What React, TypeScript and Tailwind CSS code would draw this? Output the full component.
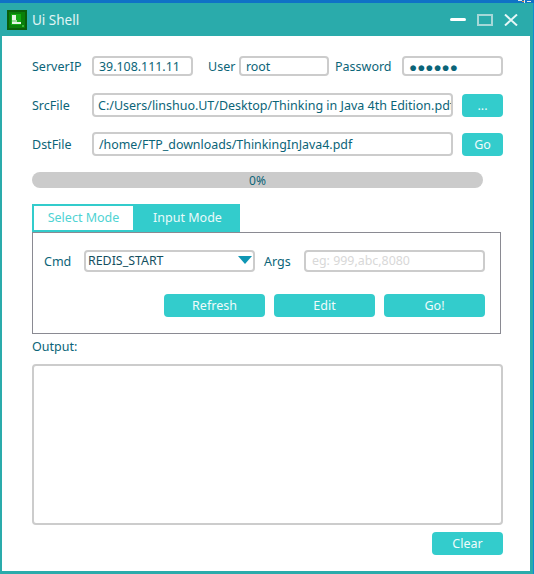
import React from 'react';

const FONT = 'font-["Noto_Sans","Open_Sans",sans-serif]';
const LABEL = 'text-[12.5px] leading-[20px] text-[#0b6478]';
const FIELD = 'h-full border-2 border-[#cccccc] rounded-[4px] bg-white text-[12.4px] leading-[18px] text-[#0b6478] overflow-hidden whitespace-nowrap';

function ActionButton({ label, className }: { label: string; className: string }) {
  return (
    <button className={`h-[23px] rounded-[4px] bg-[#33cccc] text-[#f0fbfb] text-[12.5px] leading-[23px] text-center ${className}`}>
      {label}
    </button>
  );
}

function AppLogo() {
  return (
    <svg width="20" height="20" viewBox="0 0 20 20">
      <rect width="20" height="20" fill="#0a5f0a" />
      <rect x="2" y="2" width="16" height="16" fill="#0a7f0a" />
      <rect x="4" y="4" width="10" height="11" fill="#12a812" />
      <rect x="5" y="5" width="4" height="5" fill="#e4f5e4" />
      <rect x="5" y="10" width="5" height="2" fill="#9ddb9d" />
      <rect x="5" y="12" width="9" height="2" fill="#e4f5e4" />
      <rect x="15" y="15" width="2" height="2" fill="#35b835" />
    </svg>
  );
}

function TitleBar() {
  return (
    <div className="h-[33px] flex items-center pl-[7px] pr-[15px] bg-[#2aabab]">
      <AppLogo />
      <span className="ml-[5px] mt-[1px] text-[13.5px] text-[#e2f6f6]">Ui Shell</span>
      <div className="ml-auto flex items-center gap-[11px]">
        <div className="w-[16px] h-[3px] rounded-full bg-white" />
        <div className="w-[16px] h-[12px] border-2 border-[#a5d8d8]" />
        <svg width="14" height="12" viewBox="0 0 14 12">
          <path d="M1 0.5 L13 11.5 M13 0.5 L1 11.5" stroke="#e6f7f7" strokeWidth="2" />
        </svg>
      </div>
    </div>
  );
}

export default function App() {
  return (
    <div className={`w-[534px] h-[574px] overflow-hidden bg-[#2aabab] ${FONT}`}>
      <div className="flex justify-end h-[3px] bg-[#0f72c6]">
        {/* bit of the desktop showing through at the corner */}
        <svg width="18" height="3" viewBox="0 0 18 3">
          <path d="M2 0 H6 V1 H2 Z M8 0 H9 V3 H8 Z M11 1 H15 V2 H11 Z" fill="#e8e8e8" />
          <path d="M6 1 H8 V2 H6 Z" fill="#e09040" />
        </svg>
      </div>
      <div className="flex">
        <div className="w-[533px]">
          <TitleBar />
          <div className="ml-[2px] w-[528px] h-[535px] bg-white pl-[30px] pt-[20px]">
            {/* connection row */}
            <div className="flex items-center h-[20px]">
              <span className={`${LABEL} w-[60px] mt-[2px]`}>ServerIP</span>
              <div className={`${FIELD} w-[101px] pl-[5px]`}>39.108.111.11</div>
              <span className={`${LABEL} ml-[15px] w-[31px] mt-[2px]`}>User</span>
              <div className={`${FIELD} w-[90px] pl-[5px]`}>root</div>
              <span className={`${LABEL} ml-[6px] w-[67px] mt-[2px]`}>Password</span>
              <div className={`${FIELD} w-[101px] pl-[5px]`}>
                <span className="text-[13.5px]">●●●●●●</span>
              </div>
            </div>

            {/* file rows */}
            <div className="flex items-center h-[24px] mt-[17px]">
              <span className={`${LABEL} w-[60px] mt-[1px]`}>SrcFile</span>
              <div className={`${FIELD} w-[361px] pl-[4px] pr-[1px] leading-[22px] text-[12.5px]`}>C:/Users/linshuo.UT/Desktop/Thinking in Java 4th Edition.pdf</div>
              <ActionButton label="..." className="ml-[9px] w-[41px]" />
            </div>
            <div className="flex items-center h-[24px] mt-[15px]">
              <span className={`${LABEL} w-[60px] mt-[1px]`}>DstFile</span>
              <div className={`${FIELD} w-[361px] pl-[5px] leading-[22px]`}>/home/FTP_downloads/ThinkingInJava4.pdf</div>
              <ActionButton label="Go" className="ml-[9px] w-[41px]" />
            </div>

            {/* progress */}
            <div className="mt-[16px] w-[451px] h-[16px] rounded-full bg-[#cbcbcb] text-center text-[12px] leading-[17px] text-[#0b6478]">0%</div>

            {/* tabs */}
            <div className="mt-[16px] flex h-[28px]">
              <div className="w-[103px] border-2 border-[#33cccc] bg-white text-center text-[12.5px] leading-[24px] text-[#4fd3d3]">Select Mode</div>
              <div className="w-[105px] bg-[#33cccc] text-center text-[12.5px] leading-[28px] text-[#eafafa]">Input Mode</div>
            </div>
            <div className="w-[469px] h-[102px] border border-[#8a8a92] pl-[11px] pr-[15px] pt-[17px]">
              <div className="flex items-center h-[22px]">
                <span className={`${LABEL} w-[40px] mt-[1px]`}>Cmd</span>
                <div className={`${FIELD} relative w-[171px] pl-[2px] leading-[15px] text-[#14505f]`}>
                  REDIS_START
                  <svg width="14" height="8" viewBox="0 0 14 8" className="absolute right-[1px] top-[4px]">
                    <path d="M0 0 H14 L7 8 Z" fill="#0e96b4" />
                  </svg>
                </div>
                <span className={`${LABEL} ml-[9px] w-[40px] mt-[1px]`}>Args</span>
                <div className={`${FIELD} w-[181px] pl-[6px] text-[#d8d8d8]`}>eg: 999,abc,8080</div>
              </div>
              <div className="mt-[22px] flex gap-[9px] pl-[120px]">
                <ActionButton label="Refresh" className="w-[101px]" />
                <ActionButton label="Edit" className="w-[101px]" />
                <ActionButton label="Go!" className="w-[101px]" />
              </div>
            </div>

            {/* output */}
            <div className={`${LABEL} mt-[3px]`}>Output:</div>
            <div className="mt-[7px] w-[471px] h-[161px] border-2 border-[#cccccc] rounded-[4px]" />
            <div className="mt-[7px] w-[471px] flex justify-end">
              <ActionButton label="Clear" className="w-[71px]" />
            </div>
          </div>
        </div>
        <div className="w-[1px] h-[571px] bg-[#0f8fd0]" />
      </div>
    </div>
  );
}
